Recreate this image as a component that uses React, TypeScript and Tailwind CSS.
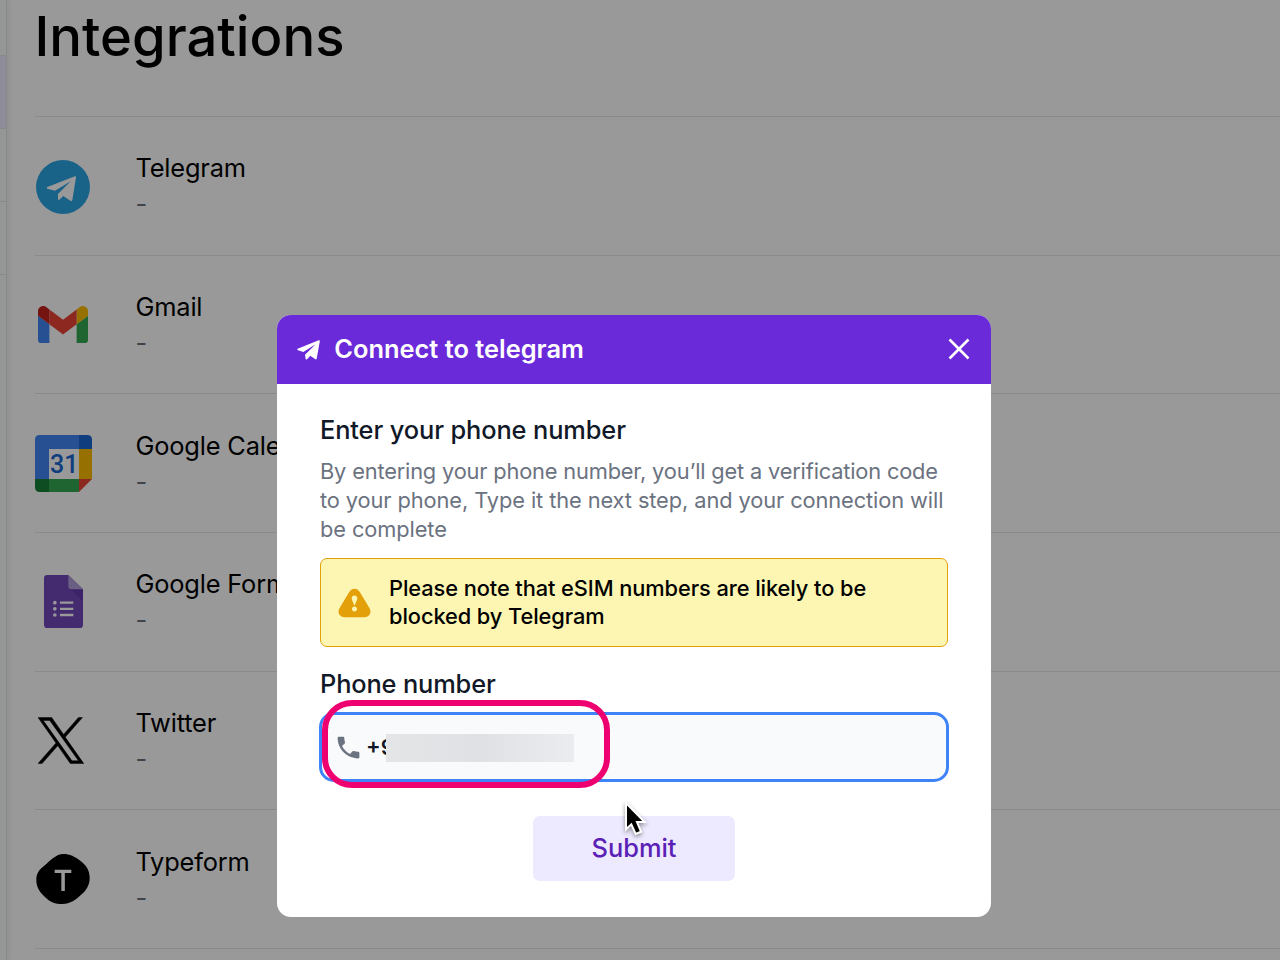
import React from "react";
import { MdPhone } from "react-icons/md";
import { TiWarning } from "react-icons/ti";

function TelegramIcon() {
  return (
    <svg width="54" height="54" viewBox="0 0 162 162" className="mt-0.5">
      <circle cx="81" cy="81" r="81" fill="#2aa5e3" />
      <path
        d="M34 81 117 49Q121 47 120 52L109 120Q107 125 103 122L82 108 70 119Q66 122 66 116V102L104 64 57 92 34 86Q30 83 34 81Z"
        fill="#fff"
      />
    </svg>
  );
}

function GmailIcon() {
  return (
    <svg width="50" height="37.5" viewBox="52 42 88 66">
      <path fill="#4285f4" d="M58 108h14V74L52 59v43c0 3.32 2.69 6 6 6" />
      <path fill="#34a853" d="M120 108h14c3.32 0 6-2.69 6-6V59l-20 15" />
      <path fill="#fbbc04" d="M120 48v26l20-15v-8c0-7.42-8.47-11.65-14.4-7.2" />
      <path fill="#ea4335" d="M72 74V48l24 18 24-18v26L96 92" />
      <path fill="#c5221f" d="M52 51v8l20 15V48l-5.6-4.2c-5.94-4.45-14.4-.22-14.4 7.2" />
    </svg>
  );
}

function CalendarIcon() {
  return (
    <svg width="57" height="57" viewBox="0 0 171 171" className="mt-px -mr-px shrink-0">
      <path fill="#fff" d="M42 42h90v90H42z" />
      <path fill="#4285f4" d="M14 0H132V42H42V132H0V14Q0 0 14 0Z" />
      <path fill="#1967d2" d="M132 0H157Q171 0 171 14V42H132Z" />
      <path fill="#fbbc04" d="M132 42h39v90h-39z" />
      <path fill="#34a853" d="M42 132h90v39H42z" />
      <path fill="#188038" d="M0 132H42V171H14Q0 171 0 157Z" />
      <path fill="#ea4335" d="M132 132h39l-39 39z" />
      <text
        x="88"
        y="114"
        textAnchor="middle"
        fontSize="75"
        fill="#1967d2"
        className="font-['Roboto',sans-serif] font-medium"
      >
        31
      </text>
    </svg>
  );
}

function FormsIcon() {
  return (
    <svg width="39" height="53" viewBox="0 0 117 159">
      <path fill="#7248b9" d="M10 0H73L117 43V149Q117 159 107 159H10Q0 159 0 149V10Q0 0 10 0Z" />
      <path fill="#653aad" d="M78 40 117 79V43Z" />
      <path fill="#b39ddb" d="M73 0 117 43H83Q73 43 73 33Z" />
      <g fill="#fff">
        <circle cx="32.500" cy="83" r="5.500" />
        <circle cx="32.500" cy="101.500" r="5.500" />
        <circle cx="32.500" cy="120" r="5.500" />
        <path d="M48 79.500h40v7H48zM48 98h40v7H48zM48 116.500h40v7H48z" />
      </g>
    </svg>
  );
}

function XIcon() {
  return (
    <svg width="46" height="47" viewBox="0 0 300 300.250" className="mt-px -ml-[5px]">
      <path
        stroke="#000"
        strokeWidth="3"
        d="M178.570 127.150 290.270 0h-26.460l-97.030 110.380L89.340 0H0l117.130 166.930L0 300.250h26.460l102.400-116.590 81.800 116.590H300M36.010 19.540H76.660l187.130 262.130h-40.660"
      />
    </svg>
  );
}

function TypeformIcon() {
  return (
    <svg width="54" height="50" viewBox="0 0 162 150">
      <path d="M82 0C101 0 117 8 134 21C151 34 161 50 161 72C161 92 152 108 137 121C119 138 103 150 79 150C58 150 42 144 26 128C10 113 1 99 1 78C1 60 8 48 24 36C43 20 60 0 82 0Z" />
      <path fill="#fff" d="M56 47H106V57H86.500V111H76V57H56Z" />
    </svg>
  );
}

function PlaneIcon() {
  return (
    <svg width="23" height="20" viewBox="0 0 69 60" fill="#fff">
      <path d="M2 26 65 1Q69 0 68.500 4L59 56Q58 60 54 57L40 47 31 57Q26 61 25.500 55L24 44 56 13 19 36 3 31Q-1 28 2 26Z" />
    </svg>
  );
}

const integrations = [
  { name: "Telegram", icon: <TelegramIcon /> },
  { name: "Gmail", icon: <GmailIcon /> },
  { name: "Google Calendar", icon: <CalendarIcon /> },
  { name: "Google Forms", icon: <FormsIcon /> },
  { name: "Twitter", icon: <XIcon /> },
  { name: "Typeform", icon: <TypeformIcon /> },
];

function Sidebar() {
  return (
    <aside className="w-[7px] shrink-0 border-r border-[#e5e7eb] bg-[#f9fafb] shadow-[0_0_6px_rgba(0,0,0,0.12)]">
      <div className="h-[56px] border-b border-[#e5e7eb]" />
      <div className="h-[73px] border-b border-[#e5e7eb] bg-[#ede9fe]" />
      <div className="h-[73px] border-b border-[#e5e7eb]" />
      <div className="h-[73px] border-b border-[#e5e7eb]" />
    </aside>
  );
}

function ConnectModal() {
  return (
    <div className="relative h-[602px] w-[714px] overflow-hidden rounded-[14px] bg-white">
      <header className="flex h-[69px] items-center bg-[#6b2ad9] pl-[19.500px] pr-[21px]">
        <PlaneIcon />
        <h2 className="ml-[14.800px] grow text-[25.4px] font-semibold text-white">
          Connect to telegram
        </h2>
        <button type="button" aria-label="Close" className="mb-0.5">
          <svg width="22" height="22" viewBox="0 0 22 22" stroke="#fff" strokeWidth="2.600">
            <path d="M1.500 1.500 20.500 20.500M20.500 1.500 1.500 20.500" />
          </svg>
        </button>
      </header>
      <form className="flex flex-col px-[43px] pt-[28px]">
        <h3 className="text-[25.4px] leading-9 font-medium tracking-[-0.12px] text-[#111928]">
          Enter your phone number
        </h3>
        <p className="mt-[9px] text-[21.8px] leading-[29px] tracking-[-0.09px] whitespace-nowrap text-[#6b7280]">
          <span className="tracking-[-0.17px]">
            By entering your phone number, you’ll get a verification code
          </span>
          <br />
          to your phone, Type it the next step, and your connection will
          <br />
          be complete
        </p>
        <div className="mt-[14px] flex h-[89px] items-center rounded-[7px] border border-[#e3a008] bg-[#fdf6b2] pl-[14px]">
          <TiWarning size={39} color="#e3a008" />
          <p className="mb-0.5 ml-[15px] text-[21.8px] leading-7 font-medium tracking-[-0.08px] whitespace-nowrap text-black">
            Please note that eSIM numbers are likely to be
            <br />
            blocked by Telegram
          </p>
        </div>
        <label className="mt-[19px] text-[25.4px] leading-9 font-medium tracking-[-0.15px] text-[#111928]">
          Phone number
        </label>
        <div className="-mx-px mt-[10px] flex h-[70px] items-center rounded-[15px] border-[3px] border-[#3f83f8] bg-[#f9fafb] pl-3">
          <MdPhone size={29} color="#6b7280" />
          <span className="ml-[3px] text-[21.8px] font-semibold text-[#111928]">
            +9
          </span>
          <span className="z-10 mt-0.5 -ml-[9px] h-7 w-[188px] bg-linear-to-r from-[#e4e5e7] via-[#e0e1e4] to-[#ebecef]" />
        </div>
        <button
          type="button"
          className="mt-[34px] h-[65px] w-[202px] self-center rounded-[7px] bg-[#ede9fe] text-[25.4px] font-medium text-[#5b21b6]"
        >
          Submit
        </button>
      </form>
      {/* highlight around the number */}
      <div className="absolute top-[385px] left-[45px] h-[88px] w-[288px] rounded-[30px] border-[6px] border-[#ee0070]" />
      <svg
        className="absolute top-[484px] left-[346px] drop-shadow-[0_2px_2px_rgba(0,0,0,0.4)]"
        width="28"
        height="40"
        viewBox="0 0 84 120"
      >
        <path
          d="M9 12V91L25 76 38 105 54 98 42 69H65Z"
          fill="#000"
          stroke="#fff"
          strokeWidth="6"
        />
      </svg>
    </div>
  );
}

function App() {
  return (
    <div className="relative h-[960px] w-[1280px] overflow-hidden bg-white font-['Inter',sans-serif]">
      <div className="flex h-full">
        <Sidebar />
        <main className="ml-[28px] grow">
          <h1 className="-ml-[0.5px] h-[116px] text-[54.4px] leading-[72px] font-medium text-black">
            Integrations
          </h1>
          {integrations.map(({ name, icon }) => (
            <div
              key={name}
              className="flex h-[138.650px] items-center border-t border-[#e5e7eb] pt-px"
            >
              <div className="mb-px flex w-[56px] justify-center">{icon}</div>
              <div className="ml-[44.500px] text-[25.4px] leading-9 tracking-[-0.18px]">
                <p className="text-black">{name}</p>
                <p className="text-[#6b7280]">-</p>
              </div>
            </div>
          ))}
          <div className="border-t border-[#e5e7eb]" />
        </main>
      </div>
      <div className="absolute inset-0 bg-black/40 pt-[315px] pl-[277px]">
        <ConnectModal />
      </div>
    </div>
  );
}

export default App;
